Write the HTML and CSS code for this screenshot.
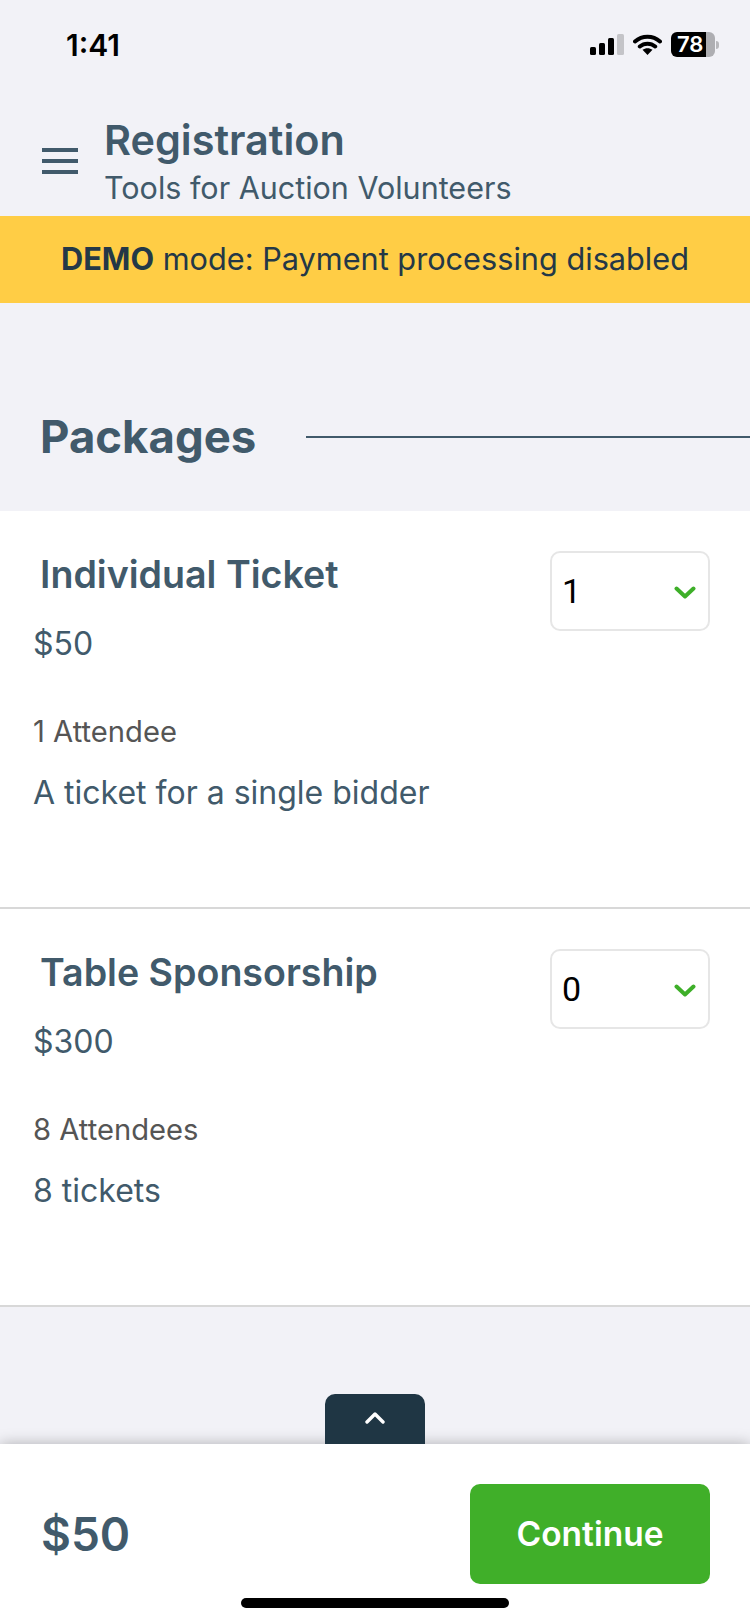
FILE: index.html
```html
<!DOCTYPE html>
<html lang="en">
<head>
<meta charset="utf-8">
<title>Registration</title>
<link rel="stylesheet" href="styles.css">
</head>
<body>
<div class="page">
  <div class="status">
    <span class="time">1:41</span>
    <div class="status-icons">
      <svg class="signal" width="34" height="21" viewBox="0 0 34 21"><rect x="0" y="13" width="6" height="8" rx="1.5" fill="#000"/><rect x="9" y="9" width="6" height="12" rx="1.5" fill="#000"/><rect x="18" y="4" width="6" height="17" rx="1.5" fill="#000"/><rect x="27" y="0" width="7" height="21" rx="1.5" fill="#c4c4c8"/></svg>
      <svg class="wifi" width="29" height="21" viewBox="0 0 29 21"><path d="M2 7.500C9.200 1 19.800 1 27 7.500M6.800 12.500C11.200 8.700 17.800 8.700 22.200 12.500" fill="none" stroke="#000" stroke-width="4" stroke-linecap="round"/><path d="M14.500 21l-5-5.200c2.900-2.200 7.100-2.200 10 0z" fill="#000"/></svg>
      <div class="battery"><span class="battery-num">78</span></div>
      <span class="battery-nub"></span>
    </div>
  </div>
  <header class="header">
    <button class="burger" aria-label="Menu"><span></span><span></span><span></span></button>
    <div class="titles">
      <h1 class="title">Registration</h1>
      <p class="subtitle">Tools for Auction Volunteers</p>
    </div>
  </header>
  <div class="demo"><b>DEMO</b> mode: Payment processing disabled</div>
  <main class="main">
    <div class="section-head">
      <h2 class="section-title">Packages</h2>
      <span class="section-line"></span>
    </div>
    <section class="packages">
      <article class="package">
        <div class="package-info">
          <h3 class="package-name">Individual Ticket</h3>
          <p class="price">$50</p>
          <p class="attendees">1 Attendee</p>
          <p class="desc">A ticket for a single bidder</p>
        </div>
        <div class="select"><span class="select-value">1</span>
          <svg class="select-chevron" width="22" height="13" viewBox="0 0 22 13"><path d="M2.500 2.500l8.500 8 8.500-8" fill="none" stroke="#3eaf29" stroke-width="4" stroke-linecap="round" stroke-linejoin="round"/></svg>
        </div>
      </article>
      <article class="package">
        <div class="package-info">
          <h3 class="package-name">Table Sponsorship</h3>
          <p class="price">$300</p>
          <p class="attendees">8 Attendees</p>
          <p class="desc">8 tickets</p>
        </div>
        <div class="select"><span class="select-value">0</span>
          <svg class="select-chevron" width="22" height="13" viewBox="0 0 22 13"><path d="M2.500 2.500l8.500 8 8.500-8" fill="none" stroke="#3eaf29" stroke-width="4" stroke-linecap="round" stroke-linejoin="round"/></svg>
        </div>
      </article>
    </section>
  </main>
  <footer class="footer">
    <button class="tab" aria-label="Expand">
      <svg width="20" height="12" viewBox="0 0 20 12"><path d="M2 10l8-8 8 8" fill="none" stroke="#fff" stroke-width="3.400" stroke-linecap="round" stroke-linejoin="round"/></svg>
    </button>
    <div class="footer-row">
      <span class="total">$50</span>
      <button class="continue">Continue</button>
    </div>
    <div class="home"></div>
  </footer>
</div>
</body>
</html>
```
FILE: styles.css
```css
* { box-sizing: border-box; }
html, body { margin: 0; padding: 0; }
body { background: #f2f2f7; font-family: Inter, "Liberation Sans", sans-serif; color: #415a6b; }
h1, h2, h3, p { margin: 0; }
button { border: 0; padding: 0; font: inherit; }
.page { width: 750px; height: 1624px; display: flex; flex-direction: column; overflow: hidden; }

.status { height: 88px; padding: 28px 31px 0 66px; display: flex; justify-content: space-between; align-items: flex-start; }
.time { font-size: 30px; line-height: 34px; font-weight: 600; color: #000; }
.status-icons { display: flex; align-items: center; padding-top: 4px; }
.wifi { margin-left: 9px; }
.battery { margin-left: 9px; width: 44px; height: 25px; border-radius: 6px; background: linear-gradient(90deg, #000 0, #000 35px, #aeaeb2 35px); color: #fff; display: flex; align-items: center; padding-left: 6px; }
.battery-num { font-size: 22px; font-weight: 600; line-height: 25px; }
.battery-nub { margin-left: 1px; width: 3px; height: 8px; border-radius: 0 3px 3px 0; background: #b8b8bc; }

.header { height: 128px; padding: 30px 0 0 42px; display: flex; align-items: flex-start; }
.burger { width: 36px; margin-top: 30px; display: flex; flex-direction: column; gap: 7px; background: none; }
.burger span { display: block; height: 4px; background: #415a6b; }
.titles { margin-left: 26px; }
.title { font-size: 41.400px; line-height: 44px; font-weight: 600; }
.subtitle { font-size: 30.500px; line-height: 40px; margin-top: 6px; font-weight: 400; }

.demo { height: 87px; background: #ffcd45; color: #243847; font-size: 30.700px; line-height: 85px; text-align: center; }
.demo b { font-weight: 700; }

.main { flex: 1; }
.section-head { height: 208px; padding: 60px 0 0 40px; display: flex; align-items: center; }
.section-title { font-size: 45.500px; line-height: 54px; font-weight: 700; }
.section-line { flex: 1; margin-left: 50px; height: 2px; background: #415a6b; }

.packages { background: #fff; }
.package { height: 398px; padding: 40px 40px 0 33px; border-bottom: 2px solid #d8d8d8; display: flex; justify-content: space-between; align-items: flex-start; }
.package-name { font-size: 37.600px; line-height: 44px; font-weight: 600; margin-left: 7px; margin-top: 2px; }
.price { font-size: 32px; line-height: 40px; margin-top: 27px; }
.attendees { font-size: 29.200px; line-height: 36px; margin-top: 50px; color: #555; }
.desc { font-size: 32px; line-height: 40px; margin-top: 23px; }
.select { width: 160px; height: 80px; border: 2px solid #e6e6e6; border-radius: 10px; padding: 0 12px 0 10px; display: flex; justify-content: space-between; align-items: center; }
.select-value { font-family: Roboto, "Liberation Sans", sans-serif; font-size: 34px; font-weight: 400; color: #000; }
.select-chevron { margin-top: 3px; }

.footer { position: relative; height: 180px; background: #fff; box-shadow: 0 0 14px rgba(0,0,0,.28); display: flex; flex-direction: column; }
.tab { position: absolute; left: 325px; top: -50px; width: 100px; height: 50px; background: #1f3644; border-radius: 10px 10px 0 0; display: flex; justify-content: center; padding-top: 18px; }
.footer-row { height: 154px; padding: 40px 40px 0 41px; display: flex; justify-content: space-between; align-items: flex-start; }
.total { font-size: 46px; line-height: 100px; font-weight: 600; }
.continue { width: 240px; height: 100px; background: #40af29; color: #fff; border-radius: 10px; font-size: 33.500px; font-weight: 600; }
.home { align-self: center; width: 268px; height: 10px; border-radius: 5px; background: #000; }
```
